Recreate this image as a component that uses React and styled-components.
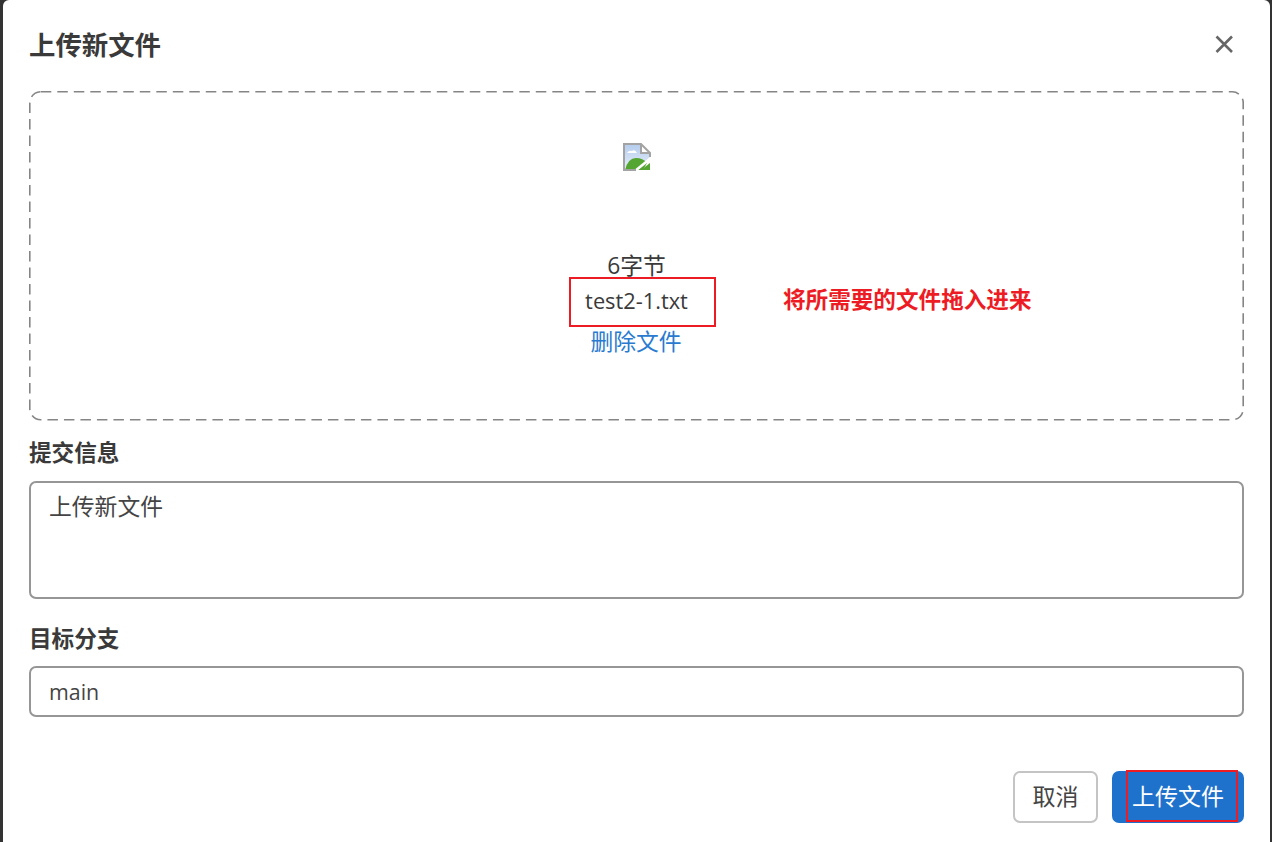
import React from 'react'
import styled, { createGlobalStyle } from 'styled-components'

const Global = createGlobalStyle`
  html, body {
    margin: 0;
    padding: 0;
    height: 100%;
    overflow: hidden;
    background: #333;
  }
  * {
    box-sizing: border-box;
  }
`

const FONT = `"Open Sans", "Noto Sans CJK SC", sans-serif`

// css dashed borders are too short here, the dashes are about 10px long
const DASHES = `url("data:image/svg+xml,%3Csvg xmlns='http://www.w3.org/2000/svg' width='1215' height='330'%3E%3Crect x='0.8' y='0.8' width='1213.4' height='328' rx='11' fill='none' stroke='%23858585' stroke-width='1.6' stroke-dasharray='10.5 6'/%3E%3C/svg%3E")`

const Backdrop = styled.div`
  width: 1272px;
  height: 842px;
  padding: 0 2px 0 3px;
  background: #333;
  font-family: ${FONT};
  color: #333;
`

const Modal = styled.div`
  height: 842px;
  background: #fff;
  border-radius: 6px 6px 0 0;
  padding: 0 26px 0 26px;
`

const Header = styled.div`
  height: 91px;
  display: flex;
  align-items: flex-start;
  justify-content: space-between;
  padding-top: 26px;
`

const Title = styled.h2`
  margin: 0;
  font-size: 26.4px;
  line-height: 38px;
  font-weight: 700;
  color: #3a3a3a;
`

const CloseButton = styled.button`
  width: 20px;
  height: 20px;
  padding: 0;
  margin: 8px 10px 0 0;
  border: none;
  background: none;
  display: flex;
  color: #666;
`

const DropZone = styled.div`
  position: relative;
  height: 330px;
  background-image: ${DASHES};
  display: flex;
  flex-direction: column;
  align-items: center;
  padding-top: 52px;
`

const BrokenImage = styled.svg`
  display: block;
  width: 28px;
  height: 28px;
  margin-bottom: 78px;
`

const Size = styled.div`
  font-size: 22.8px;
  line-height: 33px;
  height: 35px;
  color: #3a3a3a;
`

const FileName = styled.div`
  font-size: 21.8px;
  line-height: 33px;
  height: 35px;
  color: #3a3a3a;
`

const RemoveLink = styled.a`
  font-size: 22.8px;
  line-height: 46px;
  color: #2a7bd0;
  margin-left: -1px;
`

const NoteBox = styled.div`
  position: absolute;
  border: 2px solid #ed1c24;
  pointer-events: none;
`

const FileBox = styled(NoteBox)`
  left: 540px;
  top: 186px;
  width: 147px;
  height: 50px;
`

const DropNote = styled.div`
  position: absolute;
  left: 754px;
  top: 191px;
  font-size: 22.6px;
  line-height: 36px;
  font-weight: 700;
  color: #ed1c24;
  white-space: nowrap;
`

const Field = styled.div`
  display: flex;
  flex-direction: column;
`

const Label = styled.label`
  font-size: 22.6px;
  line-height: 32px;
  font-weight: 700;
  color: #3a3a3a;
  margin-bottom: ${p => p.$gap}px;
  margin-top: ${p => p.$top}px;
`

const TextArea = styled.div`
  height: 118px;
  border: 2px solid #969696;
  border-radius: 7px;
  padding: 6px 18px;
  font-size: 22.8px;
  line-height: 36px;
  color: #444;
`

const Input = styled.div`
  height: 51px;
  border: 2px solid #969696;
  border-radius: 7px;
  padding: 0 18px;
  font-size: 21.4px;
  line-height: 48px;
  color: #444;
`

const Footer = styled.div`
  display: flex;
  justify-content: flex-end;
  gap: 14px;
  margin-top: 54px;
`

const Button = styled.button`
  position: relative;
  height: 52px;
  width: ${p => p.$width}px;
  padding: 0 0 5px;
  border-radius: 7px;
  font-family: ${FONT};
  font-size: 23px;
  border: 2px solid ${p => (p.$primary ? '#1f72cc' : '#c4c4c4')};
  background: ${p => (p.$primary ? '#1f72cc' : '#fff')};
  color: ${p => (p.$primary ? '#fff' : '#444')};
`

const ButtonBox = styled(NoteBox)`
  left: 12px;
  top: -3px;
  width: 112px;
  height: 52px;
`

export default function App() {
  return (
    <>
      <Global />
      <Backdrop>
        <Modal>
          <Header>
            <Title>上传新文件</Title>
            <CloseButton aria-label="关闭">
              <svg width="20" height="20" viewBox="0 0 20 20" fill="none" stroke="currentColor" strokeWidth="2.6">
                <path d="M2.5 2.5 L18 18 M18 2.5 L2.5 18" />
              </svg>
            </CloseButton>
          </Header>
          <DropZone>
            <BrokenImage viewBox="0 0 28 28">
              <defs>
                <linearGradient id="sky" x1="0" y1="0" x2="0" y2="1">
                  <stop offset="0" stopColor="#b4ccee" />
                  <stop offset="1" stopColor="#e6eefa" />
                </linearGradient>
              </defs>
              <path d="M1 1 H18 L27 10 V14 L14 27 H1 Z" fill="url(#sky)" />
              <path d="M4 10 q2 -3 5 -2 q3 -2 5 2 Z" fill="#fff" />
              <path d="M2 27 Q5 15 13 15 Q20 15 24 20 L20 27 Z" fill="#55a532" />
              <path d="M18 27 L27 20 V27 Z" fill="#55a532" />
              <path d="M12 28 L28 15" stroke="#fff" strokeWidth="2.6" />
              <path d="M18 1 V10 H27 Z" fill="#fff" />
              <path d="M13 27 H1 V1 H18 L27 10 V14 M18 1 V10 H27" fill="none" stroke="#a3a3a3" strokeWidth="2" />
            </BrokenImage>
            <Size>6字节</Size>
            <FileName>test2-1.txt</FileName>
            <RemoveLink>删除文件</RemoveLink>
            <FileBox />
            <DropNote>将所需要的文件拖入进来</DropNote>
          </DropZone>
          <Field>
            <Label $top={16} $gap={12}>提交信息</Label>
            <TextArea>上传新文件</TextArea>
          </Field>
          <Field>
            <Label $top={24} $gap={11}>目标分支</Label>
            <Input>main</Input>
          </Field>
          <Footer>
            <Button $width={85}>取消</Button>
            <Button $primary $width={132}>
              上传文件
              <ButtonBox />
            </Button>
          </Footer>
        </Modal>
      </Backdrop>
    </>
  )
}
